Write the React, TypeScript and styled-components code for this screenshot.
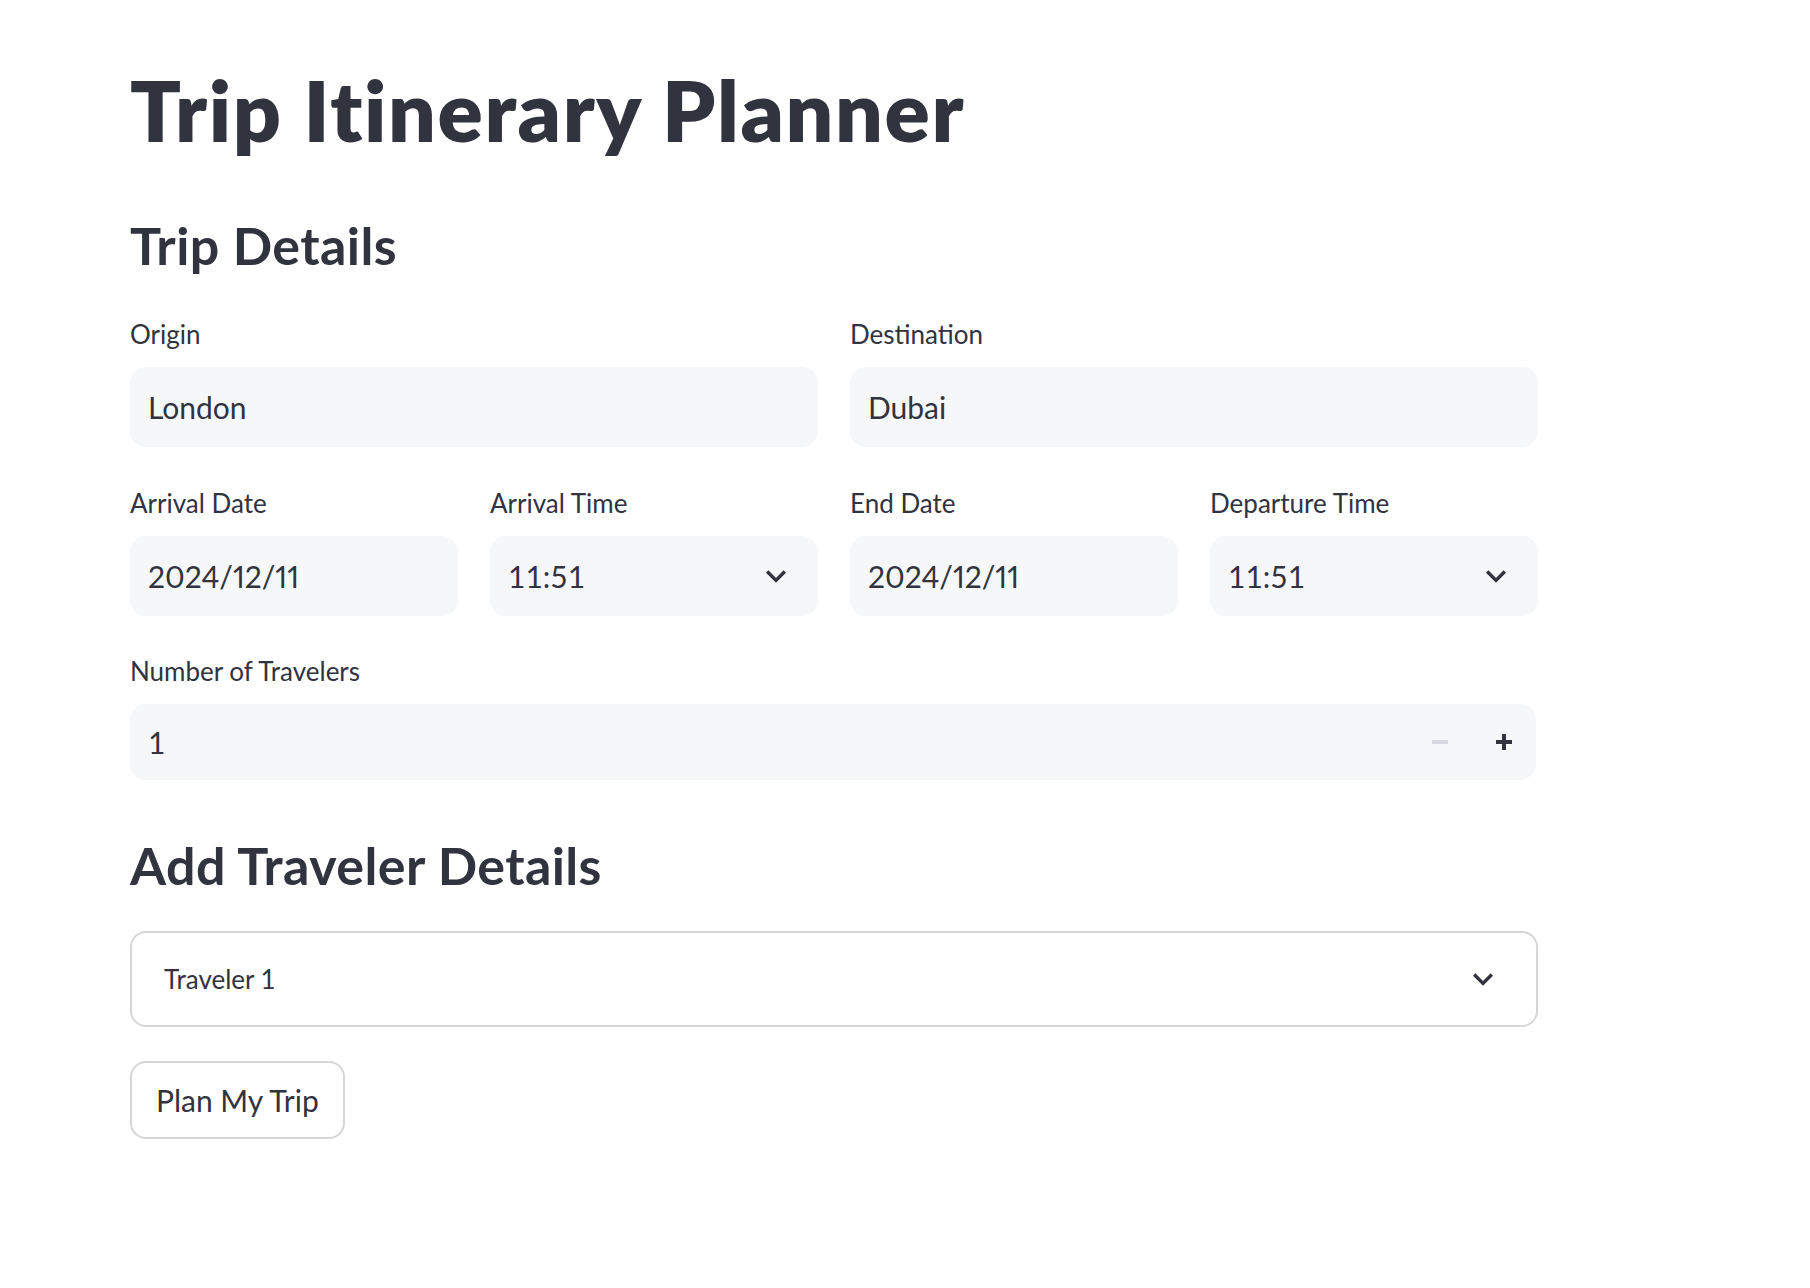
import React from "react";
import styled, { createGlobalStyle } from "styled-components";

const GlobalStyle = createGlobalStyle`
  body {
    margin: 0;
    background: #ffffff;
    color: #31333f;
    font-family: Lato, "Noto Sans", sans-serif;
    font-variant-numeric: proportional-nums;
  }
`;

const Main = styled.main`
  display: flex;
  flex-direction: column;
  width: 1408px;
  padding: 61px 0 120px 130px;
`;

const Title = styled.h1`
  margin: 0;
  font-size: 84px;
  line-height: 98px;
  font-weight: 800;
  letter-spacing: 1.6px;
  color: #31333f;
`;

const Subheader = styled.h3<{ $top: number }>`
  margin: ${(p) => p.$top}px 0 0;
  font-size: 52px;
  line-height: 62px;
  font-weight: 700;
  letter-spacing: 0.4px;
  color: #31333f;
`;

const Row = styled.div<{ $cols: number; $top: number }>`
  display: grid;
  grid-template-columns: repeat(${(p) => p.$cols}, 1fr);
  column-gap: 32px;
  margin-top: ${(p) => p.$top}px;
`;

const Field = styled.div`
  display: flex;
  flex-direction: column;
`;

const Label = styled.label`
  font-size: 26px;
  line-height: 31px;
  margin-bottom: 17px;
  color: #31333f;
`;

const InputBox = styled.div<{ $height?: number; $inset?: number }>`
  display: flex;
  align-items: center;
  height: ${(p) => p.$height ?? 80}px;
  margin-right: ${(p) => p.$inset ?? 0}px;
  box-sizing: border-box;
  padding: 0 0 0 18px;
  background: #f6f7f9;
  border-radius: 16px;
`;

const Value = styled.span<{ $tabular?: boolean }>`
  flex: 1;
  font-size: 30px;
  font-variant-numeric: ${(p) => (p.$tabular ? "tabular-nums" : "proportional-nums")};
  color: #31333f;
`;

const ChevronSlot = styled.span`
  display: flex;
  align-items: center;
  justify-content: center;
  width: 84px;
  color: #31333f;
`;

const StepButton = styled.span<{ $disabled?: boolean }>`
  display: flex;
  align-items: center;
  justify-content: center;
  width: 64px;
  height: 100%;
  color: ${(p) => (p.$disabled ? "#d5d8e1" : "#31333f")};
`;

const Expander = styled.div`
  display: flex;
  align-items: center;
  height: 96px;
  box-sizing: border-box;
  margin-top: 35px;
  padding: 0 33px 0 32px;
  border: 2px solid #d6d6d9;
  border-radius: 16px;
`;

const ExpanderLabel = styled.span`
  flex: 1;
  font-size: 26px;
  font-variant-numeric: tabular-nums;
  color: #31333f;
`;

const Button = styled.button`
  align-self: flex-start;
  height: 78px;
  margin-top: 34px;
  padding: 0 24px;
  background: #ffffff;
  border: 2px solid #d6d6d9;
  border-radius: 16px;
  font-family: inherit;
  font-size: 30px;
  color: #31333f;
`;

const Chevron = ({ size = 40 }: { size?: number }) => (
  <svg width={size} height={size} viewBox="0 0 24 24" fill="currentColor">
    <path d="M16.59 8.59L12 13.17 7.41 8.59 6 10l6 6 6-6z" />
  </svg>
);

const Minus = () => (
  <svg width="16" height="16" viewBox="0 0 16 16" fill="currentColor">
    <rect x="0" y="6" width="16" height="4" />
  </svg>
);

const Plus = () => (
  <svg width="16" height="16" viewBox="0 0 16 16" fill="currentColor">
    <rect x="0" y="6" width="16" height="4" />
    <rect x="6" y="0" width="4" height="16" />
  </svg>
);

const TextField = ({ label, value }: { label: string; value: string }) => (
  <Field>
    <Label>{label}</Label>
    <InputBox>
      <Value>{value}</Value>
    </InputBox>
  </Field>
);

const SelectField = ({ label, value }: { label: string; value: string }) => (
  <Field>
    <Label>{label}</Label>
    <InputBox>
      <Value $tabular>{value}</Value>
      <ChevronSlot>
        <Chevron />
      </ChevronSlot>
    </InputBox>
  </Field>
);

export default function App() {
  return (
    <>
      <GlobalStyle />
      <Main>
        <Title>Trip Itinerary Planner</Title>
        <Subheader $top={55}>Trip Details</Subheader>

        <Row $cols={2} $top={43}>
          <TextField label="Origin" value="London" />
          <TextField label="Destination" value="Dubai" />
        </Row>

        <Row $cols={4} $top={41}>
          <TextField label="Arrival Date" value="2024/12/11" />
          <SelectField label="Arrival Time" value="11:51" />
          <TextField label="End Date" value="2024/12/11" />
          <SelectField label="Departure Time" value="11:51" />
        </Row>

        <Row $cols={1} $top={40}>
          <Field>
            <Label>Number of Travelers</Label>
            <InputBox $height={76} $inset={2}>
              <Value $tabular>1</Value>
              <StepButton $disabled>
                <Minus />
              </StepButton>
              <StepButton>
                <Plus />
              </StepButton>
            </InputBox>
          </Field>
        </Row>

        <Subheader $top={54}>Add Traveler Details</Subheader>

        <Expander>
          <ExpanderLabel>Traveler 1</ExpanderLabel>
          <Chevron size={40} />
        </Expander>

        <Button>Plan My Trip</Button>
      </Main>
    </>
  );
}
